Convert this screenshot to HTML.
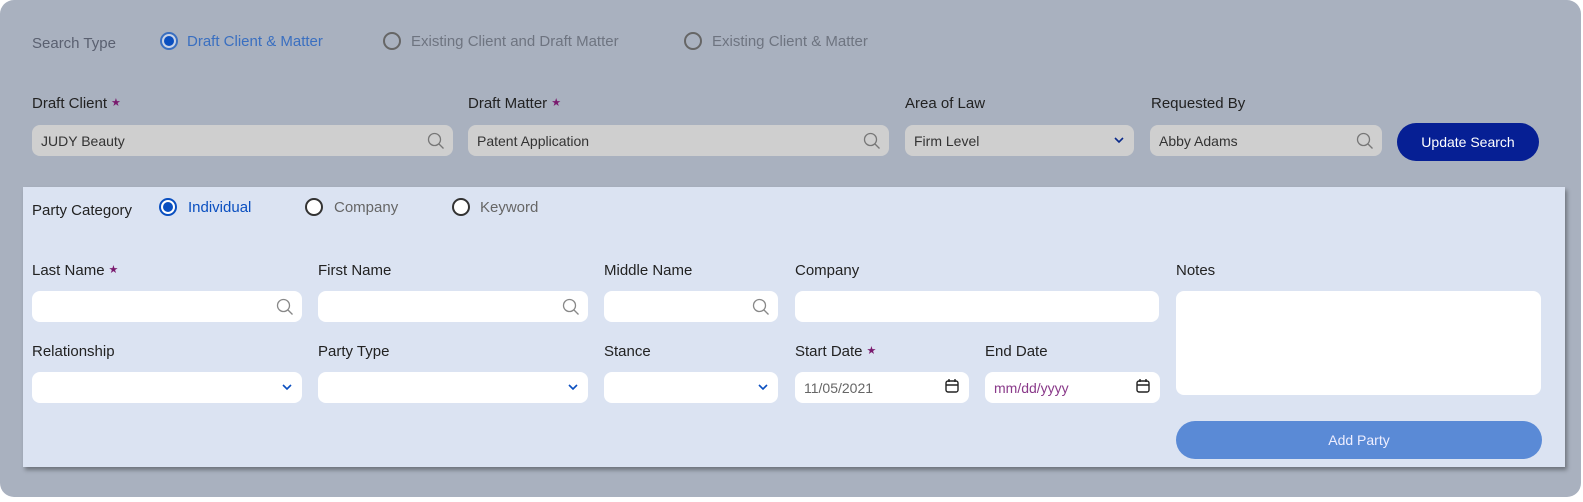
<!DOCTYPE html>
<html><head><style>
*{box-sizing:border-box;margin:0;padding:0}
body{width:1583px;height:502px;background:#fff;font-family:"Liberation Sans",Arial,sans-serif;position:relative;overflow:hidden}
.frame{position:absolute;left:0;top:0;width:1581px;height:497px;background:#a9b1bf;border-radius:14px}
.a{position:absolute;white-space:nowrap}
.lbl{font-size:15px;color:#222}
.star{color:#7a1a6e;font-size:11px;margin-left:4px;vertical-align:2px}
.inp{position:absolute;height:31px;border-radius:8px;background:#fff}
.grey{background:#cfcfcf}
.val{position:absolute;left:9px;top:8px;font-size:14px;color:#333}
.ic{position:absolute;top:7px;right:8px}
.radio{position:absolute;width:18px;height:18px;border-radius:50%;border:2px solid #333;background:#fff}
.radio.on{border-color:#0a4fc0;background:#fff}
.radio.on::after{content:"";position:absolute;left:2px;top:2px;width:10px;height:10px;border-radius:50%;background:#0a4fc0}
.rt{font-size:15px}
</style></head><body>
<div class="frame"></div>

<div class="a" style="left:32px;top:35px;font-size:15px;color:#5a6070">Search Type</div>
<div class="radio on" style="left:160px;top:32px;border-color:#3a6fc0;background:#c9d3e6"></div>
<style>.radio.on.s1::after{}</style>
<div class="a rt" style="left:187px;top:33px;color:#3a6fc0">Draft Client &amp; Matter</div>
<div class="radio" style="left:383px;top:32px;border-color:#666;background:transparent"></div>
<div class="a rt" style="left:411px;top:33px;color:#6e7480">Existing Client and Draft Matter</div>
<div class="radio" style="left:684px;top:32px;border-color:#666;background:transparent"></div>
<div class="a rt" style="left:712px;top:33px;color:#6e7480">Existing Client &amp; Matter</div>

<div class="a lbl" style="left:32px;top:95px">Draft Client<span class="star">★</span></div>
<div class="a lbl" style="left:468px;top:95px">Draft Matter<span class="star">★</span></div>
<div class="a lbl" style="left:905px;top:95px">Area of Law</div>
<div class="a lbl" style="left:1151px;top:95px">Requested By</div>

<div class="inp grey" style="left:32px;top:125px;width:421px"><div class="val">JUDY Beauty</div><svg class="ic" width="18" height="18" viewBox="0 0 18 18"><circle cx="7.5" cy="7.5" r="6" fill="none" stroke="#777" stroke-width="1.3"/><path d="M12 12l4.5 4.5" stroke="#777" stroke-width="1.3"/></svg></div>
<div class="inp grey" style="left:468px;top:125px;width:421px"><div class="val">Patent Application</div><svg class="ic" width="18" height="18" viewBox="0 0 18 18"><circle cx="7.5" cy="7.5" r="6" fill="none" stroke="#777" stroke-width="1.3"/><path d="M12 12l4.5 4.5" stroke="#777" stroke-width="1.3"/></svg></div>
<div class="inp grey" style="left:905px;top:125px;width:229px"><div class="val">Firm Level</div><svg class="ic" style="top:11px;right:10px" width="10" height="8" viewBox="0 0 10 8"><path d="M1 2l4 4 4-4" fill="none" stroke="#0a2a8a" stroke-width="1.6"/></svg></div>
<div class="inp grey" style="left:1150px;top:125px;width:232px"><div class="val">Abby Adams</div><svg class="ic" width="18" height="18" viewBox="0 0 18 18"><circle cx="7.5" cy="7.5" r="6" fill="none" stroke="#777" stroke-width="1.3"/><path d="M12 12l4.5 4.5" stroke="#777" stroke-width="1.3"/></svg></div>
<div class="a" style="left:1397px;top:123px;width:142px;height:38px;border-radius:19px;background:#061f94;color:#fff;font-size:14px;text-align:center;line-height:38px">Update Search</div>

<div class="a" style="left:23px;top:187px;width:1542px;height:280px;background:#dbe3f2;box-shadow:2px 3px 4px rgba(0,0,0,0.35)"></div>

<div class="a" style="left:32px;top:202px;font-size:15px;color:#222">Party Category</div>
<div class="radio on" style="left:159px;top:198px"></div>
<div class="a rt" style="left:188px;top:199px;color:#0a4fc0">Individual</div>
<div class="radio" style="left:305px;top:198px"></div>
<div class="a rt" style="left:334px;top:199px;color:#666">Company</div>
<div class="radio" style="left:452px;top:198px"></div>
<div class="a rt" style="left:480px;top:199px;color:#666">Keyword</div>

<div class="a lbl" style="left:32px;top:262px">Last Name<span class="star">★</span></div>
<div class="a lbl" style="left:318px;top:262px">First Name</div>
<div class="a lbl" style="left:604px;top:262px">Middle Name</div>
<div class="a lbl" style="left:795px;top:262px">Company</div>
<div class="a lbl" style="left:1176px;top:262px">Notes</div>

<div class="inp" style="left:32px;top:291px;width:270px"><svg class="ic" width="18" height="18" viewBox="0 0 18 18"><circle cx="7.5" cy="7.5" r="6" fill="none" stroke="#888" stroke-width="1.3"/><path d="M12 12l4.5 4.5" stroke="#888" stroke-width="1.3"/></svg></div>
<div class="inp" style="left:318px;top:291px;width:270px"><svg class="ic" width="18" height="18" viewBox="0 0 18 18"><circle cx="7.5" cy="7.5" r="6" fill="none" stroke="#888" stroke-width="1.3"/><path d="M12 12l4.5 4.5" stroke="#888" stroke-width="1.3"/></svg></div>
<div class="inp" style="left:604px;top:291px;width:174px"><svg class="ic" width="18" height="18" viewBox="0 0 18 18"><circle cx="7.5" cy="7.5" r="6" fill="none" stroke="#888" stroke-width="1.3"/><path d="M12 12l4.5 4.5" stroke="#888" stroke-width="1.3"/></svg></div>
<div class="inp" style="left:795px;top:291px;width:364px"></div>
<div class="inp" style="left:1176px;top:291px;width:365px;height:104px"></div>

<div class="a lbl" style="left:32px;top:343px">Relationship</div>
<div class="a lbl" style="left:318px;top:343px">Party Type</div>
<div class="a lbl" style="left:604px;top:343px">Stance</div>
<div class="a lbl" style="left:795px;top:343px">Start Date<span class="star">★</span></div>
<div class="a lbl" style="left:985px;top:343px">End Date</div>

<div class="inp" style="left:32px;top:372px;width:270px"><svg class="ic" style="top:11px;right:10px" width="10" height="8" viewBox="0 0 10 8"><path d="M1 2l4 4 4-4" fill="none" stroke="#0a4fc0" stroke-width="1.6"/></svg></div>
<div class="inp" style="left:318px;top:372px;width:270px"><svg class="ic" style="top:11px;right:10px" width="10" height="8" viewBox="0 0 10 8"><path d="M1 2l4 4 4-4" fill="none" stroke="#0a4fc0" stroke-width="1.6"/></svg></div>
<div class="inp" style="left:604px;top:372px;width:174px"><svg class="ic" style="top:11px;right:10px" width="10" height="8" viewBox="0 0 10 8"><path d="M1 2l4 4 4-4" fill="none" stroke="#0a4fc0" stroke-width="1.6"/></svg></div>
<div class="inp" style="left:795px;top:372px;width:174px"><div class="val" style="color:#666">11/05/2021</div><svg class="ic" style="top:6px;right:10px" width="14" height="16" viewBox="0 0 14 16"><rect x="1" y="3" width="12" height="11" rx="2" fill="none" stroke="#222" stroke-width="1.4"/><path d="M1 7h12M4 1v3M10 1v3" stroke="#222" stroke-width="1.4"/></svg></div>
<div class="inp" style="left:985px;top:372px;width:175px"><div class="val" style="color:#8a3a8a">mm/dd/yyyy</div><svg class="ic" style="top:6px;right:10px" width="14" height="16" viewBox="0 0 14 16"><rect x="1" y="3" width="12" height="11" rx="2" fill="none" stroke="#222" stroke-width="1.4"/><path d="M1 7h12M4 1v3M10 1v3" stroke="#222" stroke-width="1.4"/></svg></div>

<div class="a" style="left:1176px;top:421px;width:366px;height:38px;border-radius:19px;background:#5a8ad6;color:#eef;font-size:14px;text-align:center;line-height:38px">Add Party</div>
</body></html>
